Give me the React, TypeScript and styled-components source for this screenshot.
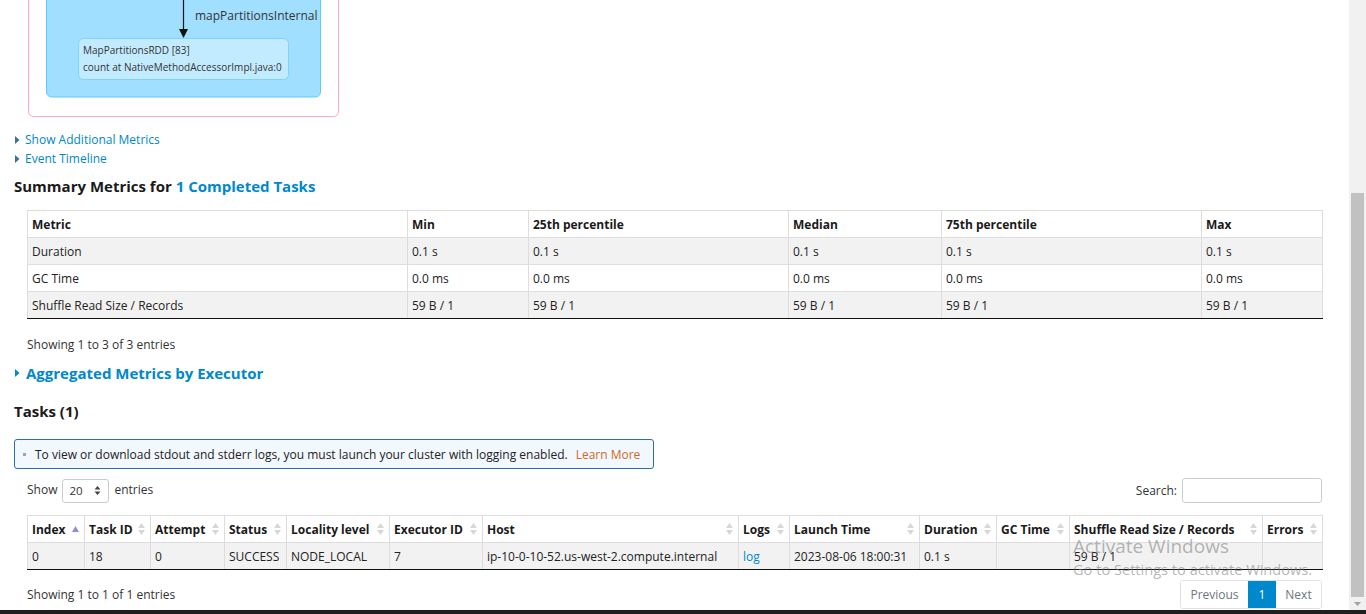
import React from "react";
import styled, { createGlobalStyle } from "styled-components";

const FONT = `"Open Sans", "Noto Sans", "Liberation Sans", sans-serif`;

const GlobalStyle = createGlobalStyle`
  html, body { margin: 0; padding: 0; background: #fff; overflow: hidden; }
  body { font-family: ${FONT}; font-size: 12px; color: #212529; }
  * { box-sizing: border-box; }
`;

const Screen = styled.div`
  position: relative;
  width: 1366px;
  height: 614px;
  display: flex;
  flex-direction: column;
  overflow: hidden;
`;

const Viewport = styled.div`
  flex: 1;
  min-height: 0;
  display: flex;
`;

const Main = styled.main`
  flex: 1;
  min-width: 0;
  padding: 0 14px;
  overflow: hidden;
`;

const Taskbar = styled.div`
  height: 4px;
  background: #1f1f1f;
`;

const ScrollTrack = styled.div`
  width: 17px;
  background: #f1f1f1;
  display: flex;
  flex-direction: column;
  align-items: center;
  padding-top: 193px;
`;

const ScrollThumb = styled.div`
  width: 13px;
  flex: 1;
  background: #c1c1c1;
`;

const ScrollArrow = styled.div`
  height: 13px;
  display: flex;
  align-items: center;
  justify-content: center;
`;

const Watermark = styled.div`
  position: absolute;
  left: 1073px;
  top: 533px;
  width: 280px;
  white-space: nowrap;
  color: rgba(120, 120, 120, 0.55);
  pointer-events: none;
  font-family: ${FONT};
`;

const WmTitle = styled.div`
  font-size: 19px;
  line-height: 26px;
`;

const WmSub = styled.div`
  font-size: 14.6px;
  line-height: 20px;
`;

const DagSvg = styled.svg`
  display: block;
`;

const ToggleList = styled.div<{ $mt: number }>`
  margin-top: ${(p) => p.$mt}px;
`;

const ToggleRow = styled.a<{ $big?: boolean }>`
  display: flex;
  align-items: center;
  gap: ${(p) => (p.$big ? "6px" : "5px")};
  height: ${(p) => (p.$big ? "20px" : "19px")};
  padding-left: 1px;
  color: #0088cc;
  text-decoration: none;
  font-size: ${(p) => (p.$big ? "15px" : "12px")};
  font-weight: ${(p) => (p.$big ? 700 : 400)};
  cursor: pointer;
`;

const Heading = styled.h4<{ $mt: number }>`
  margin: ${(p) => p.$mt}px 0 0;
  font-size: 15px;
  line-height: 20px;
  font-weight: 700;
  color: #1a1a1a;
`;

const HeadLink = styled.a`
  color: #0088cc;
  text-decoration: none;
`;

const Section = styled.div<{ $mt: number }>`
  margin: ${(p) => p.$mt}px 13px 0;
`;

const DataTable = styled.table`
  width: 100%;
  border-collapse: collapse;
  table-layout: fixed;
`;

const Th = styled.th`
  height: 27px;
  padding: 0 4px;
  border: 1px solid #dddddd;
  text-align: left;
  font-weight: 700;
  font-size: 12px;
  color: #1a1a1a;
  background: #fff;
  white-space: nowrap;
  overflow: hidden;
`;

const Tr = styled.tr<{ $odd?: boolean }>`
  background: ${(p) => (p.$odd ? "#f2f2f2" : "#ffffff")};
  &:last-child td {
    border-bottom: 1px solid #111;
  }
`;

const Td = styled.td`
  height: 27px;
  padding: 0 4px;
  border: 1px solid #dddddd;
  font-size: 12px;
  color: #222;
  white-space: nowrap;
  overflow: hidden;
`;

const LogLink = styled.a`
  color: #0088cc;
  text-decoration: none;
`;

const SortHead = styled.div`
  display: flex;
  align-items: center;
  justify-content: space-between;
  gap: 4px;
`;

const Info = styled.div<{ $mt: number }>`
  margin-top: ${(p) => p.$mt}px;
  font-size: 12px;
  line-height: 20px;
  color: #333;
`;

const Notice = styled.div`
  margin-top: 18px;
  width: 640px;
  height: 30px;
  display: flex;
  align-items: center;
  gap: 9px;
  padding-left: 8px;
  border: 1px solid #2c6eb3;
  border-radius: 3px;
  background: #f2f8fe;
  font-size: 12px;
  color: #222;
`;

const Bullet = styled.span`
  width: 3px;
  height: 3px;
  background: #9aa4b0;
  flex: none;
`;

const LearnMore = styled.a`
  margin-left: 8px;
  color: #d2691e;
  text-decoration: none;
`;

const Controls = styled.div`
  margin: 9px 13px 0;
  display: flex;
  align-items: center;
  justify-content: space-between;
  height: 25px;
`;

const ControlGroup = styled.label<{ $shift?: number }>`
  display: flex;
  align-items: center;
  gap: 5px;
  font-size: 12px;
  color: #333;
`;

const LabelText = styled.span<{ $up?: boolean }>`
  margin-top: ${(p) => (p.$up ? "-3px" : "0")};
`;

const SelectBox = styled.div`
  width: 47px;
  height: 24px;
  border: 1px solid #c8ccd2;
  border-radius: 3px;
  display: flex;
  align-items: center;
  justify-content: space-between;
  padding: 0 7px 0 6px;
  font-size: 11.5px;
  color: #333;
`;

const SearchInput = styled.input`
  width: 140px;
  height: 25px;
  border: 1px solid #c8ccd2;
  border-radius: 3px;
  outline: none;
`;

const Footer = styled.div`
  margin: 10px 13px 0;
  display: flex;
  align-items: center;
  justify-content: space-between;
  height: 29px;
`;

const Pager = styled.div`
  display: flex;
  height: 29px;
  border: 1px solid #dee2e6;
  border-radius: 3px;
  overflow: hidden;
`;

const PageBtn = styled.span<{ $active?: boolean; $w: number }>`
  width: ${(p) => p.$w}px;
  display: flex;
  align-items: center;
  justify-content: center;
  font-size: 12px;
  color: ${(p) => (p.$active ? "#fff" : "#6c757d")};
  background: ${(p) => (p.$active ? "#0088cc" : "#fff")};
`;

const Caret = ({ color = "#3c6f99" }: { color?: string }) => (
  <svg width="5" height="8" viewBox="0 0 5 8">
    <polygon points="0,0 4.5,4 0,8" fill={color} />
  </svg>
);

const SortIcon = ({ active }: { active?: boolean }) =>
  active ? (
    <svg width="9" height="14" viewBox="0 0 9 14" style={{ flex: "none" }}>
      <polygon points="1,10 8,10 4.5,4" fill="#8c8fd8" />
    </svg>
  ) : (
    <svg width="9" height="18" viewBox="0 0 9 18" style={{ flex: "none" }}>
      <polygon points="1,8 8,8 4.5,3" fill="#d7d7d7" />
      <polygon points="1,10 8,10 4.5,15" fill="#d7d7d7" />
    </svg>
  );

const SelectArrows = () => (
  <svg width="7" height="11" viewBox="0 0 7 11">
    <polygon points="0.5,4.5 6.5,4.5 3.5,1" fill="#444" />
    <polygon points="0.5,6.5 6.5,6.5 3.5,10" fill="#444" />
  </svg>
);

const Dag = () => (
  <DagSvg width="330" height="120" viewBox="14 0 330 120">
    <rect x="28.5" y="-20" width="310" height="136.5" rx="5" fill="#fff" stroke="#ffa9ba" />
    <rect x="46.5" y="-20" width="274" height="117" rx="5" fill="#a0dfff" stroke="#5fc9fb" />
    <line x1="183.5" y1="-5" x2="183.5" y2="30" stroke="#111" strokeWidth="1.2" />
    <polygon points="179,29 188,29 183.5,38" fill="#111" />
    <text x="195" y="20" fontSize="12" fill="#333" fontFamily={FONT}>
      mapPartitionsInternal
    </text>
    <rect x="78.5" y="38.5" width="210" height="41" rx="5" fill="#c3ebff" stroke="#7fd2fb" />
    <text x="83" y="54" fontSize="10" fill="#333" fontFamily={FONT}>
      MapPartitionsRDD [83]
    </text>
    <text x="83" y="71" fontSize="10" fill="#333" fontFamily={FONT}>
      count at NativeMethodAccessorImpl.java:0
    </text>
  </DagSvg>
);

const summaryCols = [380, 121, 260, 153, 260, 121];
const summaryHead = ["Metric", "Min", "25th percentile", "Median", "75th percentile", "Max"];
const summaryRows = [
  ["Duration", "0.1 s", "0.1 s", "0.1 s", "0.1 s", "0.1 s"],
  ["GC Time", "0.0 ms", "0.0 ms", "0.0 ms", "0.0 ms", "0.0 ms"],
  ["Shuffle Read Size / Records", "59 B / 1", "59 B / 1", "59 B / 1", "59 B / 1", "59 B / 1"],
];

const taskCols = [57, 66, 74, 62, 103, 93, 256, 51, 130, 77, 73, 193, 60];
const taskHead = [
  "Index",
  "Task ID",
  "Attempt",
  "Status",
  "Locality level",
  "Executor ID",
  "Host",
  "Logs",
  "Launch Time",
  "Duration",
  "GC Time",
  "Shuffle Read Size / Records",
  "Errors",
];
const taskRow = [
  "0",
  "18",
  "0",
  "SUCCESS",
  "NODE_LOCAL",
  "7",
  "ip-10-0-10-52.us-west-2.compute.internal",
  "log",
  "2023-08-06 18:00:31",
  "0.1 s",
  "",
  "59 B / 1",
  "",
];

export default function App() {
  return (
    <>
      <GlobalStyle />
      <Screen>
        <Viewport>
          <Main>
            <Dag />
            <ToggleList $mt={10}>
              <ToggleRow>
                <Caret />
                Show Additional Metrics
              </ToggleRow>
              <ToggleRow>
                <Caret />
                Event Timeline
              </ToggleRow>
            </ToggleList>
            <Heading $mt={8}>
              Summary Metrics for <HeadLink>1 Completed Tasks</HeadLink>
            </Heading>
            <Section $mt={14}>
              <DataTable>
                <colgroup>
                  {summaryCols.map((w, i) => (
                    <col key={i} style={{ width: w }} />
                  ))}
                </colgroup>
                <thead>
                  <tr>
                    {summaryHead.map((h) => (
                      <Th key={h}>{h}</Th>
                    ))}
                  </tr>
                </thead>
                <tbody>
                  {summaryRows.map((r, i) => (
                    <Tr key={i} $odd={i % 2 === 0}>
                      {r.map((c, j) => (
                        <Td key={j}>{c}</Td>
                      ))}
                    </Tr>
                  ))}
                </tbody>
              </DataTable>
              <Info $mt={16}>Showing 1 to 3 of 3 entries</Info>
            </Section>
            <ToggleList $mt={8}>
              <ToggleRow $big>
                <Caret color="#0088cc" />
                Aggregated Metrics by Executor
              </ToggleRow>
            </ToggleList>
            <Heading $mt={18}>Tasks (1)</Heading>
            <Notice>
              <Bullet />
              <span>
                To view or download stdout and stderr logs, you must launch your cluster with logging
                enabled.
                <LearnMore>Learn More</LearnMore>
              </span>
            </Notice>
            <Controls>
              <ControlGroup>
                <LabelText $up>Show</LabelText>
                <SelectBox>
                  20
                  <SelectArrows />
                </SelectBox>
                <LabelText $up>entries</LabelText>
              </ControlGroup>
              <ControlGroup>
                <LabelText>Search:</LabelText>
                <SearchInput type="text" />
              </ControlGroup>
            </Controls>
            <Section $mt={12}>
              <DataTable>
                <colgroup>
                  {taskCols.map((w, i) => (
                    <col key={i} style={{ width: w }} />
                  ))}
                </colgroup>
                <thead>
                  <tr>
                    {taskHead.map((h, i) => (
                      <Th key={h}>
                        <SortHead>
                          <span>{h}</span>
                          <SortIcon active={i === 0} />
                        </SortHead>
                      </Th>
                    ))}
                  </tr>
                </thead>
                <tbody>
                  <Tr $odd>
                    {taskRow.map((c, j) => (
                      <Td key={j}>{j === 7 ? <LogLink>{c}</LogLink> : c}</Td>
                    ))}
                  </Tr>
                </tbody>
              </DataTable>
            </Section>
            <Footer>
              <Info $mt={0}>Showing 1 to 1 of 1 entries</Info>
              <Pager>
                <PageBtn $w={67}>Previous</PageBtn>
                <PageBtn $w={28} $active>
                  1
                </PageBtn>
                <PageBtn $w={45}>Next</PageBtn>
              </Pager>
            </Footer>
          </Main>
          <ScrollTrack>
            <ScrollThumb />
            <ScrollArrow>
              <svg width="7" height="4" viewBox="0 0 7 4">
                <polygon points="0,0 7,0 3.5,4" fill="#a3a3a3" />
              </svg>
            </ScrollArrow>
          </ScrollTrack>
        </Viewport>
        <Taskbar />
        <Watermark>
          <WmTitle>Activate Windows</WmTitle>
          <WmSub>Go to Settings to activate Windows.</WmSub>
        </Watermark>
      </Screen>
    </>
  );
}
